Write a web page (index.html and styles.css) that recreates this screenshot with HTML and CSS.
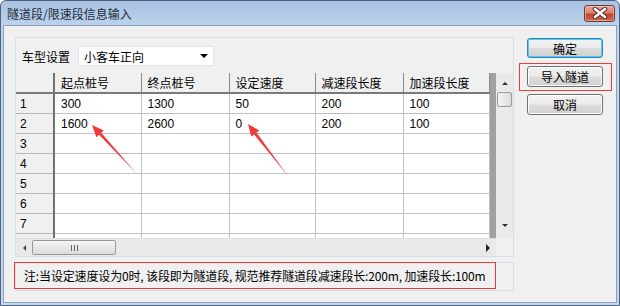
FILE: index.html
```html
<!DOCTYPE html>
<html lang="zh">
<head>
<meta charset="utf-8">
<link rel="stylesheet" href="styles.css">
</head>
<body>
<div class="window">
  <div class="titlebar">
    <span class="title">隧道段/限速段信息输入</span>
    <div class="close">
      <svg width="16" height="12" viewBox="0 0 16 12"><path d="M3 2 L13 10 M13 2 L3 10" stroke="#4a2a26" stroke-width="4.5" stroke-linecap="round"/><path d="M3 2 L13 10 M13 2 L3 10" stroke="#fff" stroke-width="2.6" stroke-linecap="round"/></svg>
    </div>
  </div>
  <div class="client">
    <div class="leftcol">
      <div class="panel">
        <div class="cartype">
          <span class="label">车型设置</span>
          <div class="combo"><span>小客车正向</span><span class="caret"></span></div>
        </div>
        <div class="gridwrap">
          <div class="gridmain">
            <div class="gridview">
              <table class="grid">
                <colgroup><col class="c0"><col class="c1"><col class="c2"><col class="c3"><col class="c4"><col class="c5"></colgroup>
                <thead>
                  <tr><th class="rh"></th><th>起点桩号</th><th>终点桩号</th><th>设定速度</th><th>减速段长度</th><th>加速段长度</th></tr>
                </thead>
                <tbody>
                  <tr><td class="rh">1</td><td>300</td><td>1300</td><td>50</td><td>200</td><td>100</td></tr>
                  <tr><td class="rh">2</td><td>1600</td><td>2600</td><td>0</td><td>200</td><td>100</td></tr>
                  <tr><td class="rh">3</td><td></td><td></td><td></td><td></td><td></td></tr>
                  <tr><td class="rh">4</td><td></td><td></td><td></td><td></td><td></td></tr>
                  <tr><td class="rh">5</td><td></td><td></td><td></td><td></td><td></td></tr>
                  <tr><td class="rh">6</td><td></td><td></td><td></td><td></td><td></td></tr>
                  <tr><td class="rh">7</td><td></td><td></td><td></td><td></td><td></td></tr>
                  <tr><td class="rh"></td><td></td><td></td><td></td><td></td><td></td></tr>
                </tbody>
              </table>
              <div class="darkstrip"></div>
            </div>
            <div class="hscroll">
              <span class="arr left"></span>
              <div class="hthumb"><span class="grip"></span></div>
              <span class="arr right"></span>
            </div>
          </div>
          <div class="vcol">
            <div class="vscroll">
              <span class="arr up"></span>
              <div class="vthumb"></div>
              <span class="arr down"></span>
            </div>
            <div class="corner"></div>
          </div>
        </div>
      </div>
      <div class="note">
        <div class="notebox">注:当设定速度设为0时, 该段即为隧道段, 规范推荐隧道段减速段长:200m, 加速段长:100m</div>
      </div>
    </div>
    <div class="buttons">
      <button class="btn default">确定</button>
      <div class="highlight"><button class="btn">导入隧道</button></div>
      <button class="btn">取消</button>
    </div>
  </div>
  <svg class="arrows" width="620" height="306" viewBox="0 0 620 306">
    <polygon fill="#f03a3a" points="92,125 103.8,130.4 101.2,132.8 137,174 99,134.8 96.4,137.2"/>
    <polygon fill="#f03a3a" points="248,124 259.3,130.5 256.5,132.6 288,176 254.1,134.4 251.3,136.6"/>
  </svg>
</div>
</body>
</html>
```
FILE: styles.css
```css
* { box-sizing: border-box; }
html, body { margin: 0; padding: 0; background: #fff; }
body { width: 620px; height: 306px; overflow: hidden; font-family: "Liberation Sans", "Noto Sans CJK SC", sans-serif; font-size: 12px; color: #000; }

.window {
  position: relative;
  width: 620px; height: 306px;
  border: 1px solid #4d6380;
  border-radius: 6px 6px 0 0;
  background: linear-gradient(#a9c2e2 0px, #bcd2ec 24px, #c4d8ef 60px, #c4d8ef 100%);
  display: flex; flex-direction: column;
}
.titlebar { height: 24px; display: flex; align-items: center; padding: 0 4px 0 6px; }
.title { font-family: "Noto Sans CJK SC", sans-serif; font-size: 12px; color: #1e2a3a; letter-spacing: 0; }
.close {
  margin-left: auto; margin-top: 0px;
  width: 31px; height: 17px;
  border: 1px solid #6c3a33; border-radius: 3px;
  background: linear-gradient(#e9a99b 0%, #d8806d 45%, #c1432f 55%, #cf6a4f 100%);
  display: flex; align-items: center; justify-content: center;
  box-shadow: inset 0 0 0 1px rgba(255,210,200,0.5);
}
.client {
  flex: 1;
  margin: 0 2px 2px 2px;
  background: #f0f0f0;
  border: 1px solid #8aa2c0;
  display: flex;
  padding: 11px 0 0 11px;
}
.leftcol { width: 499px; display: flex; flex-direction: column; }
.panel {
  height: 220px;
  border: 1px solid #d5dfe5;
  border-radius: 2px;
  background: #f0f0f0;
  display: flex; flex-direction: column;
}
.cartype { height: 35px; display: flex; align-items: center; padding-left: 6px; padding-top: 1px; }
.label { font-family: "Noto Sans CJK SC", sans-serif; width: 56px; }
.combo {
  width: 136px; height: 20px; background: #fff;
  border: 1px solid #e3e3e3;
  display: flex; align-items: center; padding-left: 5px;
  font-family: "Noto Sans CJK SC", sans-serif;
}
.caret { margin-left: auto; margin-right: 5px; width: 0; height: 0; border-left: 4px solid transparent; border-right: 4px solid transparent; border-top: 4px solid #000; }

.gridwrap { display: flex; height: 183px; }
.gridmain { width: 480px; display: flex; flex-direction: column; }
.gridview { height: 165px; overflow: hidden; display: flex; background: #fff; }
.grid { border-collapse: collapse; table-layout: fixed; width: 473px; }
.c0 { width: 38px; } .c1 { width: 87px; } .c2 { width: 88px; } .c3 { width: 86px; } .c4 { width: 88px; } .c5 { width: 86px; }
.grid th, .grid td { height: 20px; padding: 0 0 0 6px; text-align: left; font-weight: normal; white-space: nowrap; overflow: hidden; }
.grid th { font-family: "Noto Sans CJK SC", sans-serif; background: #f0f0f0; border-right: 1px solid #8c8c8c; border-bottom: 2px solid #7a7a7a; }
.grid td { border-right: 1px solid #c0c0c0; border-bottom: 1px solid #c0c0c0; padding-top: 1px; }
.grid td.rh { background: #f0f0f0; border-right: 2px solid #707070; padding-left: 4px; border-bottom: 1px solid #b8b8b8; }
.grid th.rh { border-right: 2px solid #707070; }
.darkstrip { width: 7px; background: #a0a0a0; }

.hscroll { height: 18px; background: #e9e9e9; border-top: 1px solid #e0e0e0; display: flex; align-items: center; padding: 0 2px; }
.arr { width: 0; height: 0; }
.arr.left { border-top: 3px solid transparent; border-bottom: 3px solid transparent; border-right: 3px solid #444; margin-left: 5px; }
.arr.right { border-top: 4px solid transparent; border-bottom: 4px solid transparent; border-left: 4px solid #222; margin-left: auto; margin-right: 4px; }
.hthumb { margin-left: 6px; width: 84px; height: 15px; border: 1px solid #9a9a9a; border-radius: 2px; background: linear-gradient(#f4f4f4, #dcdcdc); display: flex; align-items: center; justify-content: center; }
.grip { width: 7px; height: 6px; border-left: 1px solid #666; border-right: 1px solid #666; position: relative; }
.grip::after { content: ""; position: absolute; left: 2px; top: 0; width: 1px; height: 6px; background: #666; }

.vcol { width: 17px; display: flex; flex-direction: column; }
.vscroll { height: 165px; background: #eaeaea; display: flex; flex-direction: column; align-items: center; }
.arr.up { border-left: 3px solid transparent; border-right: 3px solid transparent; border-bottom: 3px solid #333; margin-top: 9px; }
.arr.down { border-left: 3px solid transparent; border-right: 3px solid transparent; border-top: 3px solid #333; margin-top: auto; margin-bottom: 11px; }
.vthumb { margin-top: 7px; width: 15px; height: 15px; border: 1px solid #9a9a9a; border-radius: 2px; background: linear-gradient(90deg, #f4f4f4, #dcdcdc); }
.corner { flex: 1; background: #f0f0f0; }

.note { margin-top: 5px; height: 29px; border: 1px solid #d5dfe5; border-radius: 2px; }
.notebox { width: 482px; height: 27px; margin-left: -2px; margin-top: -1px; border: 1px solid #ee3a3a; display: flex; align-items: center; padding-left: 9px; font-family: "Noto Sans CJK SC", sans-serif; font-size: 12px; white-space: nowrap; letter-spacing: -0.15px; }

.buttons { margin-left: 13px; display: flex; flex-direction: column; align-items: flex-start; }
.btn {
  width: 76px; height: 21px; padding: 0;
  font-family: "Noto Sans CJK SC", sans-serif; font-size: 12px; color: #000;
  border: 1px solid #707070; border-radius: 3px;
  background: linear-gradient(#f2f2f2 0%, #ebebeb 48%, #dddddd 52%, #cfcfcf 100%);
  box-shadow: inset 0 0 0 1px #fcfcfc;
}
.btn.default { border-color: #3c7fb1; box-shadow: inset 0 0 0 1px #48d0f7; margin-top: 1px; height: 20px; }
.highlight { margin-top: 5px; margin-left: -8px; width: 93px; height: 28px; border: 1px solid #ee3a3a; padding: 2px 0 0 7px; }
.highlight .btn { height: 21px; }
.buttons > .btn:last-child { margin-top: 3px; }

.arrows { position: absolute; left: -1px; top: -1px; pointer-events: none; }
```
